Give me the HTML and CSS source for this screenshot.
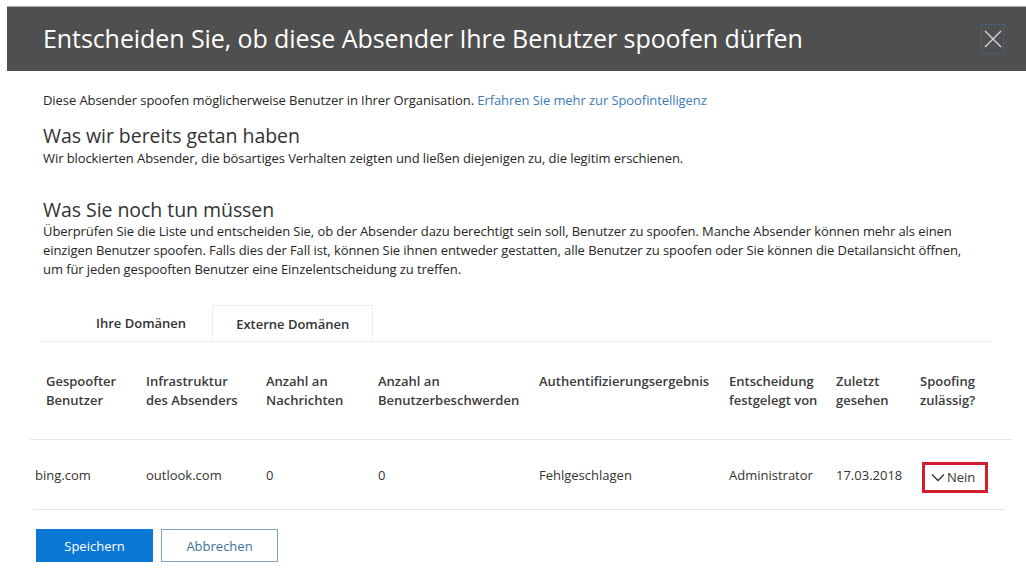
FILE: index.html
```html
<!DOCTYPE html>
<html lang="de">
<head>
<meta charset="utf-8">
<link rel="stylesheet" href="styles.css">
</head>
<body>
<header class="titlebar">
  <h1 class="title">Entscheiden Sie, ob diese Absender Ihre Benutzer spoofen dürfen</h1>
  <button class="close" aria-label="Schließen">
    <svg width="18" height="18" viewBox="0 0 18 18"><path d="M1 1L17 17M17 1L1 17" stroke="#d6d6d6" stroke-width="1.3" fill="none"/></svg>
  </button>
</header>
<main class="content">
  <p class="intro">Diese Absender spoofen möglicherweise Benutzer in Ihrer Organisation. <a class="link" href="#">Erfahren Sie mehr zur Spoofintelligenz</a></p>
  <h2 class="heading">Was wir bereits getan haben</h2>
  <p class="text">Wir blockierten Absender, die bösartiges Verhalten zeigten und ließen diejenigen zu, die legitim erschienen.</p>
  <h2 class="heading heading-2">Was Sie noch tun müssen</h2>
  <p class="text para">Überprüfen Sie die Liste und entscheiden Sie, ob der Absender dazu berechtigt sein soll, Benutzer zu spoofen. Manche Absender können mehr als einen einzigen Benutzer spoofen. Falls dies der Fall ist, können Sie ihnen entweder gestatten, alle Benutzer zu spoofen oder Sie können die Detailansicht öffnen, um für jeden gespooften Benutzer eine Einzelentscheidung zu treffen.</p>

  <div class="tabs">
    <div class="tab">Ihre Domänen</div>
    <div class="tab tab-active">Externe Domänen</div>
  </div>

  <div class="grid head">
    <div>Gespoofter<br>Benutzer</div>
    <div>Infrastruktur<br>des Absenders</div>
    <div>Anzahl an<br>Nachrichten</div>
    <div>Anzahl an<br>Benutzerbeschwerden</div>
    <div>Authentifizierungsergebnis</div>
    <div>Entscheidung<br>festgelegt von</div>
    <div>Zuletzt<br>gesehen</div>
    <div>Spoofing<br>zulässig?</div>
  </div>
  <div class="grid row">
    <div class="first">bing.com</div>
    <div>outlook.com</div>
    <div>0</div>
    <div>0</div>
    <div>Fehlgeschlagen</div>
    <div>Administrator</div>
    <div>17.03.2018</div>
    <div><span class="select"><svg width="14" height="9" viewBox="0 0 14 9"><path d="M1 1.5L7 7.5L13 1.5" stroke="#333" stroke-width="1.3" fill="none"/></svg>Nein</span></div>
  </div>

  <div class="actions">
    <button class="btn btn-primary">Speichern</button>
    <button class="btn btn-secondary">Abbrechen</button>
  </div>
</main>
</body>
</html>
```

FILE: styles.css
```css
* { box-sizing: border-box; }
html, body { margin: 0; padding: 0; background: #fff; }
body {
  font-family: "Open Sans", "Noto Sans", "Liberation Sans", sans-serif;
  color: #262626;
  width: 1026px;
  height: 585px;
  overflow: hidden;
}
.titlebar {
  margin: 6px 0 0 7px;
  height: 65px;
  background: #4f4f4f;
  border-top: 1px solid #a9a9a9;
  display: flex;
  align-items: center;
  justify-content: space-between;
  padding: 0 22px 0 36px;
}
.title {
  margin: 0;
  font-weight: 400;
  font-size: 25px;
  color: #fff;
  letter-spacing: -0.08px;
  padding-bottom: 3px;
}
.close {
  width: 23px;
  height: 30px;
  background: transparent;
  border: 1px dotted #3d6f9c;
  display: flex;
  align-items: center;
  justify-content: center;
  padding: 0;
}
.content {
  padding: 0 0 0 43px;
}
.intro {
  margin: 20px 0 0;
  font-size: 13px;
  line-height: 18px;
  letter-spacing: -0.08px;
}
.link { color: #3e7bb5; text-decoration: none; }
.heading {
  margin: 14px 0 0;
  font-weight: 400;
  font-size: 19.5px;
  line-height: 26px;
  color: #333;
  letter-spacing: -0.05px;
}
.heading-2 { margin-top: 29px; }
.text {
  margin: 0;
  font-size: 13px;
  line-height: 19px;
  letter-spacing: -0.08px;
  width: 930px;
}
.para { margin-top: -1px; }
.tabs {
  display: flex;
  margin: 26px 0 0 -3px;
  width: 950px;
  border-bottom: 1px solid #ececec;
  padding-left: 0;
}
.tab {
  font-size: 13px;
  font-weight: 600;
  color: #333;
  padding: 9px 26px 9px 56px;
  height: 36px;
  line-height: 18px;
}
.tab-active {
  border: 1px solid #ececec;
  border-bottom: 1px solid #fff;
  margin-bottom: -1px;
  padding: 9px 23px;
}
.grid {
  display: grid;
  grid-template-columns: 100px 120px 112px 161px 190px 107px 84px 1fr;
  margin-left: -13px;
  width: 982px;
  padding-left: 16px;
}
.head {
  font-size: 13px;
  font-weight: 600;
  color: #3b3b3b;
  line-height: 19px;
  padding-top: 30px;
  height: 98px;
  border-bottom: 1px solid #e6e6e6;
}
.row {
  font-size: 13px;
  color: #333;
  height: 70px;
  align-items: center;
  border-bottom: 1px solid #e6e6e6;
  width: 972px;
  margin-left: -10px;
  padding-left: 13px;
}
.first { margin-left: -11px; }
.select {
  display: inline-flex;
  align-items: center;
  gap: 2px;
  border: 3px solid #d11f2f;
  height: 31px;
  width: 66px;
  padding-left: 6px;
  margin: 5px 0 0 2px;
  font-size: 13px;
}
.actions {
  display: flex;
  gap: 8px;
  margin: 19px 0 0 -7px;
}
.btn {
  font-family: inherit;
  font-size: 13px;
  height: 33px;
  width: 117px;
  padding: 0;
}
.btn-primary {
  background: #0a78d4;
  border: 1px solid #0a78d4;
  color: #fff;
}
.btn-secondary {
  background: #fff;
  border: 1px solid #7ca3c4;
  color: #3e6f9a;
}
```
